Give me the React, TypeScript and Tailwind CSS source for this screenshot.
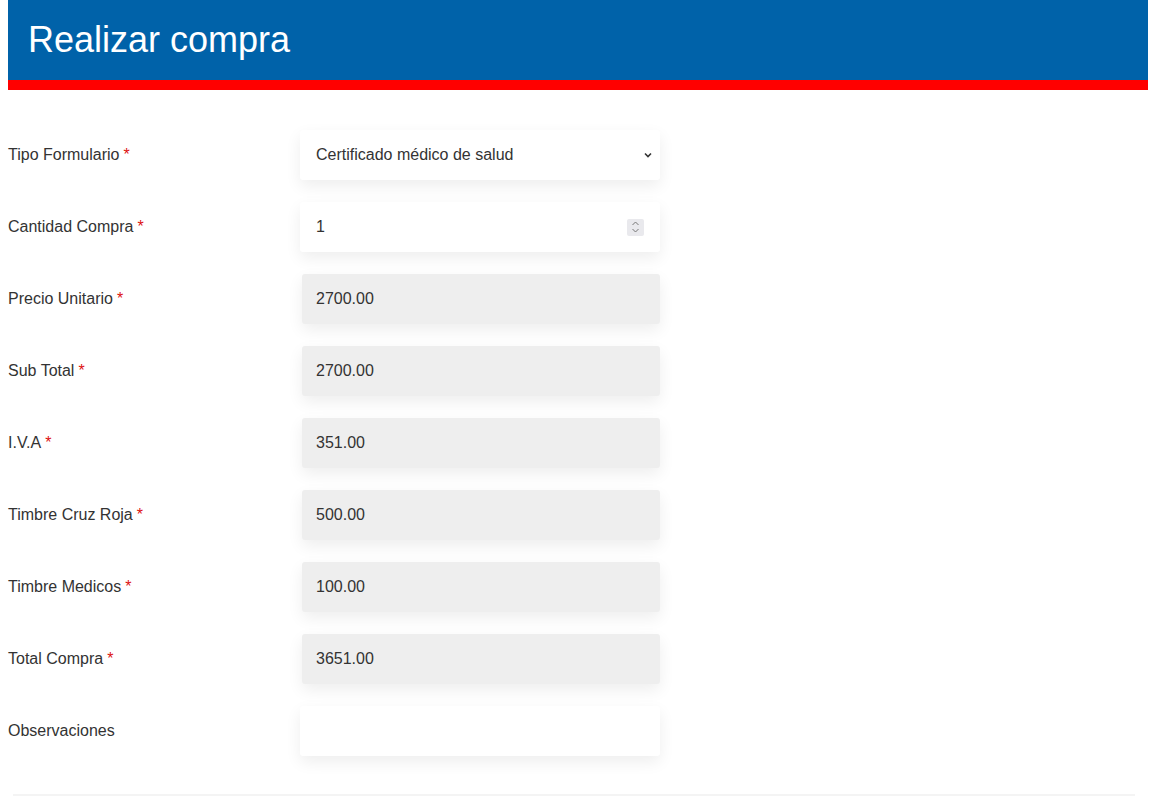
const rows: { label: string; value: string; kind: "select" | "number" | "readonly" | "text"; required: boolean }[] = [
  { label: "Tipo Formulario", value: "Certificado médico de salud", kind: "select", required: true },
  { label: "Cantidad Compra", value: "1", kind: "number", required: true },
  { label: "Precio Unitario", value: "2700.00", kind: "readonly", required: true },
  { label: "Sub Total", value: "2700.00", kind: "readonly", required: true },
  { label: "I.V.A", value: "351.00", kind: "readonly", required: true },
  { label: "Timbre Cruz Roja", value: "500.00", kind: "readonly", required: true },
  { label: "Timbre Medicos", value: "100.00", kind: "readonly", required: true },
  { label: "Total Compra", value: "3651.00", kind: "readonly", required: true },
  { label: "Observaciones", value: "", kind: "text", required: false },
];

function Field({ kind, value }: { kind: string; value: string }) {
  const base =
    "flex h-[50px] items-center rounded-[3px] text-[16px] text-[#333] shadow-[0_6px_16px_rgba(0,0,0,0.07)]";
  if (kind === "readonly") {
    return (
      <div className={`${base} ml-[2px] w-[358px] bg-[#eeeeee] pl-[14px]`}>
        {value}
      </div>
    );
  }
  if (kind === "select") {
    return (
      <div className={`${base} w-[360px] bg-white pl-[16px] pr-[6px]`}>
        <span className="flex-1">{value}</span>
        <svg width="12" height="12" viewBox="0 0 12 12" className="text-[#333]">
          <path d="M3 4.5 6 7.5 9 4.5" fill="none" stroke="currentColor" strokeWidth="1.6" />
        </svg>
      </div>
    );
  }
  if (kind === "number") {
    return (
      <div className={`${base} w-[360px] bg-white pl-[16px] pr-[16px]`}>
        <span className="flex-1">{value}</span>
        <div className="flex h-[17px] w-[17px] flex-col items-center justify-center rounded-[2px] bg-[#e9e9ed]">
          <svg width="9" height="14" viewBox="0 0 9 14" className="text-[#777]">
            <path d="M1.5 5 4.5 2 7.5 5M1.5 9 4.5 12 7.5 9" fill="none" stroke="currentColor" strokeWidth="1" />
          </svg>
        </div>
      </div>
    );
  }
  return <div className={`${base} w-[360px] bg-white`} />;
}

export default function App() {
  return (
    <div className="min-h-[804px] bg-white px-2 font-['Liberation_Sans',Arial,sans-serif] text-[#333]">
      <div className="flex h-[80px] items-center bg-[#0062a9] pl-[20px]">
        <h1 className="text-[36px] leading-none text-white">Realizar compra</h1>
      </div>
      <div className="h-[10px] bg-[#ff0000]" />

      <div className="mt-[40px] flex flex-col gap-[22px]">
        {rows.map((r) => (
          <div key={r.label} className="flex items-center">
            <div className="w-[292px] text-[16px]">
              {r.label}
              {r.required && <span className="ml-[4px] text-[#dd1111]">*</span>}
            </div>
            <Field kind={r.kind} value={r.value} />
          </div>
        ))}
      </div>

      <div className="mx-[5px] mt-[38px] h-[2px] w-[1122px] bg-[#f4f4f4]" />
    </div>
  );
}
